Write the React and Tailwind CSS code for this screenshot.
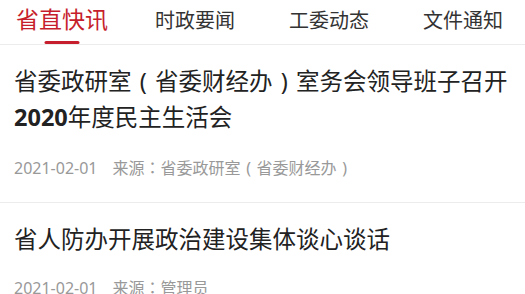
const tabs = [
  { label: "省直快讯", active: true },
  { label: "时政要闻" },
  { label: "工委动态" },
  { label: "文件通知" },
];

// centred full-width punctuation, as the reference renders it
const P = ({ children }) => (
  <span className="font-['Noto_Sans_CJK_TC',sans-serif]">{children}</span>
);
const Paren = ({ children }) => (
  <span className="inline-block w-[1em] text-center">{children}</span>
);

const news = [
  {
    id: 1,
    title: (
      <>
        省委政研室<Paren>(</Paren>省委财经办<Paren>)</Paren>室务会领导班子召开
        <span className="font-bold">2020</span>年度民主生活会
      </>
    ),
    date: "2021-02-01",
    source: (
      <>
        省委政研室<Paren>(</Paren>省委财经办<Paren>)</Paren>
      </>
    ),
  },
  {
    id: 2,
    title: "省人防办开展政治建设集体谈心谈话",
    date: "2021-02-01",
    source: "管理员",
  },
];

function TabBar() {
  return (
    <div className="h-[45px] border-b border-[#ececec] flex items-end pl-4 overflow-hidden">
      {tabs.map((t, i) => (
        <div
          key={t.label}
          className={`relative h-full flex items-center shrink-0 ${
            i === 1 ? "ml-[47px]" : i > 1 ? "ml-[54px]" : ""
          }`}
        >
          {t.active ? (
            <span className="text-[23px] leading-[30px] -mt-[7px] text-[#c61e2c]">{t.label}</span>
          ) : (
            <span className="text-[20px] leading-[30px] -mt-[3px] text-[#333333]">{t.label}</span>
          )}
          {t.active && (
            <div className="absolute bottom-0 left-1/2 -translate-x-1/2 w-[35px] h-[3px] rounded-full bg-[#c61e2c]" />
          )}
        </div>
      ))}
    </div>
  );
}

function NewsItem({ item, last }) {
  return (
    <div className={`px-[14px] pt-[18px] ${last ? "pb-[20px]" : "pb-[22px] border-b border-[#ececec]"}`}>
      <h3 className="text-[23.5px] leading-[36px] text-[#222222] font-normal">{item.title}</h3>
      <div className={`${last ? "mt-[18px]" : "mt-[20px]"} flex items-center text-[16px] leading-[24px] text-[#999999]`}>
        <span>{item.date}</span>
        <span className="ml-[15px]">
          来源<P>：</P>
          {item.source}
        </span>
      </div>
    </div>
  );
}

export default function App() {
  return (
    <div
      className="w-[525px] h-[294px] overflow-hidden bg-white"
      style={{ fontFamily: '"Noto Sans", "Noto Sans CJK SC", sans-serif' }}
    >
      <TabBar />
      {news.map((n, i) => (
        <NewsItem key={n.id} item={n} last={i === news.length - 1} />
      ))}
    </div>
  );
}
